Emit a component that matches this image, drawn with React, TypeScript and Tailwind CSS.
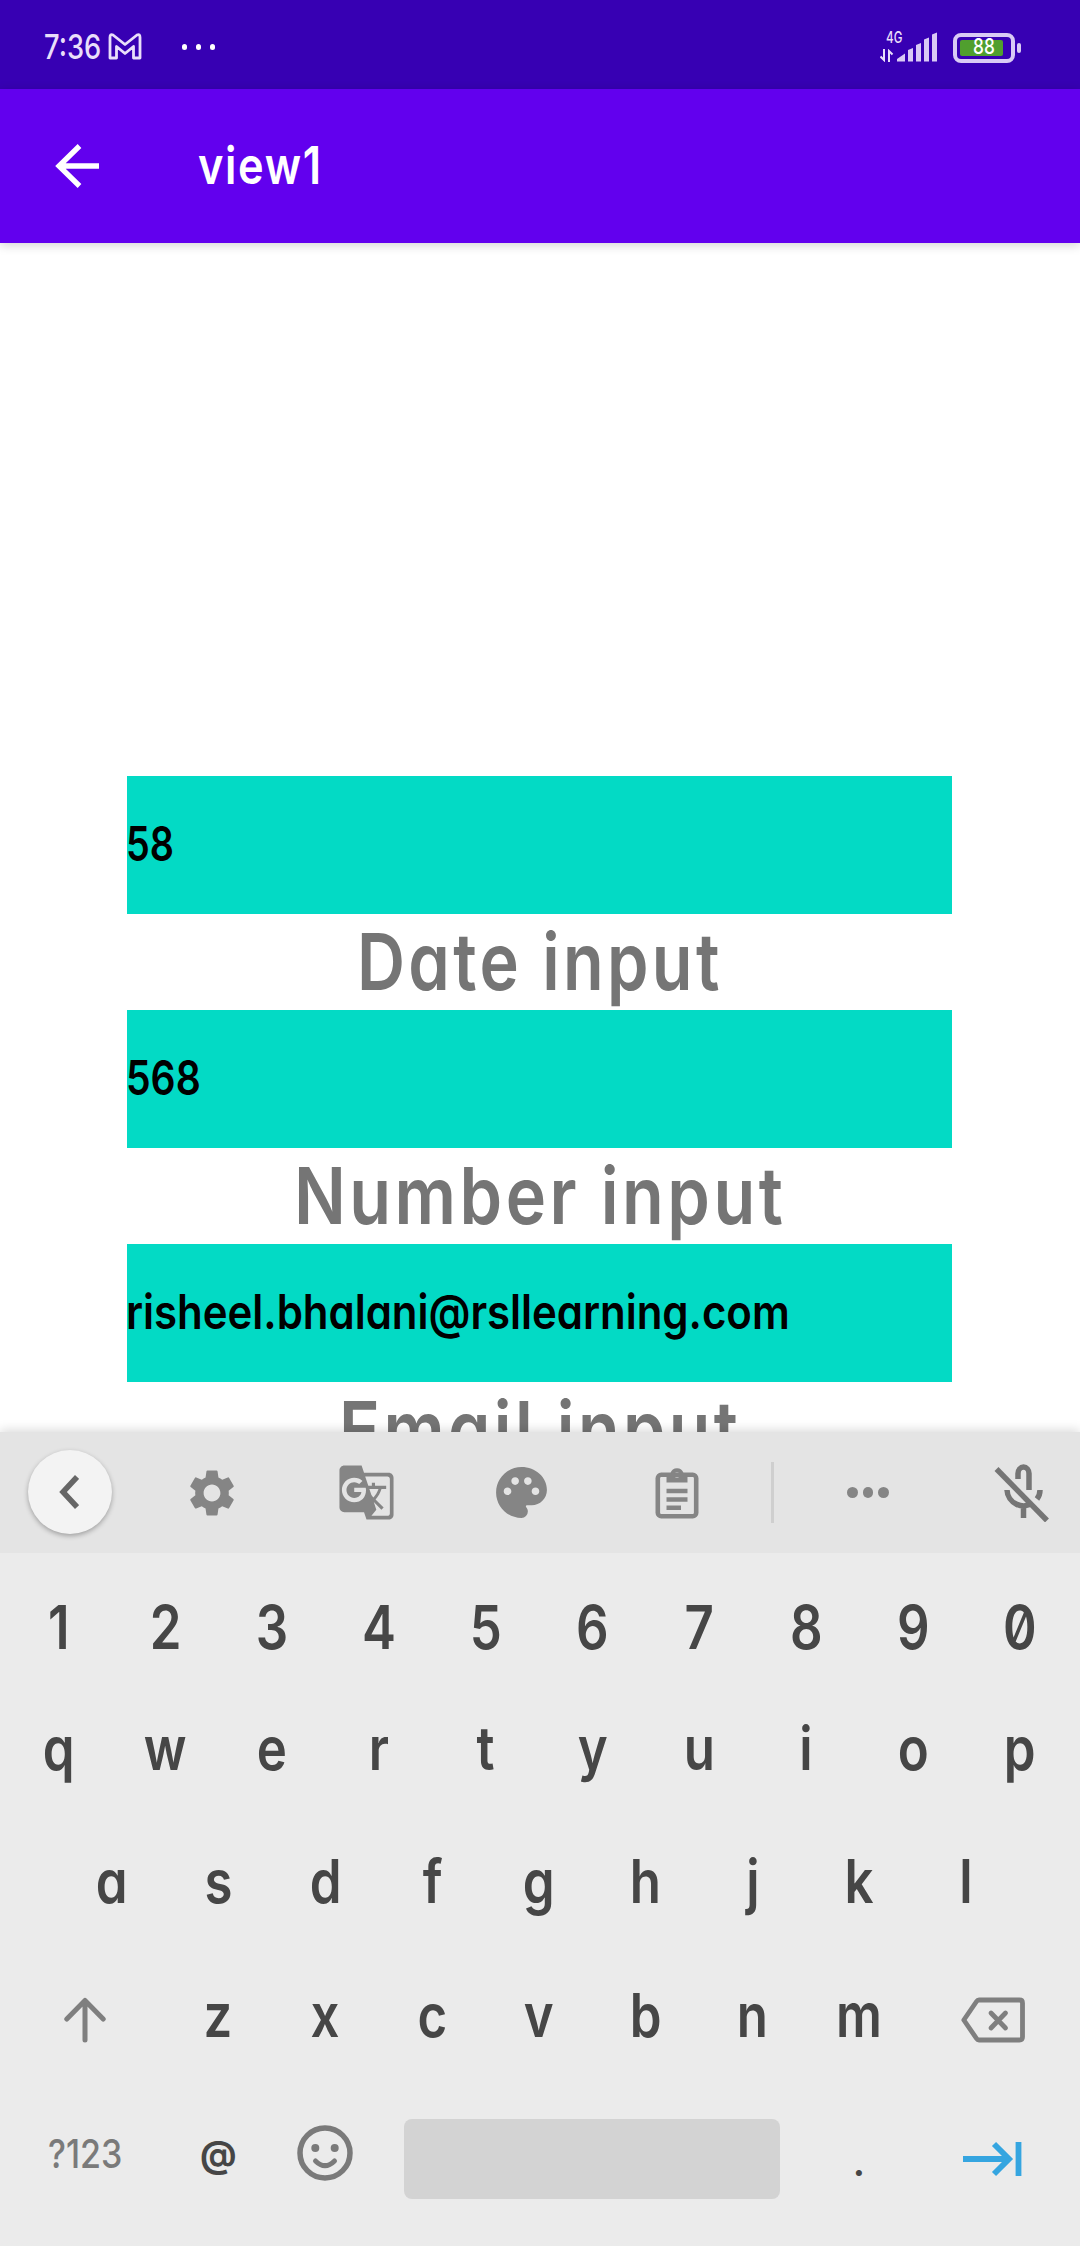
import { useLayoutEffect, useRef, type ReactNode } from 'react';
import { MdSettings, MdGTranslate, MdPalette } from 'react-icons/md';

/** One line of text squeezed or stretched sideways to an exact width. */
function FitText({ width, className, children }: { width: number; className: string; children: string }) {
  const line = useRef<HTMLSpanElement>(null);
  useLayoutEffect(() => {
    const fit = () => {
      if (!line.current) return;
      line.current.style.transform = `scaleX(${width / line.current.offsetWidth})`;
    };
    fit();
    document.fonts?.ready.then(fit);
  }, [width]);
  return (
    <span className="block shrink-0" style={{ width }}>
      <span ref={line} className={`inline-block origin-left whitespace-nowrap ${className}`}>
        {children}
      </span>
    </span>
  );
}

function StatusBar() {
  return (
    <header className="flex h-[89px] items-center bg-[#3700b3] pt-[4px] pr-[59px] pl-[44px] text-[#e9defa]">
      <FitText width={57} className="text-[34px] leading-[40px] font-medium">7:36</FitText>
      <svg className="ml-[7px]" width="34" height="27" viewBox="0 0 34 27" fill="none" stroke="currentColor" strokeWidth="2.8" strokeLinejoin="round">
        <path d="M2 25V4.500Q2 0.500 5 2L17 11.500L29 2Q32 0.500 32 4.500V25H25.500V13.500L17 20.500L8.500 13.500V25Z" />
      </svg>
      <div className="ml-[40px] flex gap-[9px]">
        <i className="h-[6px] w-[5px] rounded-full bg-white" />
        <i className="h-[6px] w-[5px] rounded-full bg-white" />
        <i className="h-[6px] w-[5px] rounded-full bg-white" />
      </div>
      <div className="ml-auto flex h-[34px] items-end">
        <div className="flex h-[39px] w-[17px] flex-col justify-between">
          <div className="ml-[6px] h-[14px]">
            <FitText width={16} className="text-[16px] leading-[14px] font-medium">4G</FitText>
          </div>
          <svg className="mb-[2px]" width="14" height="13" viewBox="0 0 14 13" fill="none" stroke="currentColor" strokeWidth="2">
            <path d="M4 0V11L0.500 7.500M9 13V2L12.500 5.500" />
          </svg>
        </div>
        <svg className="mb-[2px]" width="41" height="30" viewBox="0 0 41 30" fill="#d9caf5">
          <path d="M0 29.500V27L8 21.500V29.500ZM11 29.500V18L16 16V29.500ZM19 29.500V13L24 11V29.500ZM27 29.500V7.500L32 5.500V29.500ZM35 29.500V2.500L40 0.500V29.500Z" />
        </svg>
        <div className="mb-[1px] ml-[15px] flex items-center">
          <div className="flex h-[30px] w-[62px] items-center rounded-[8px] border-4 border-[#d9caf5] px-[3px]">
            <div className="flex h-[16px] w-[43px] items-center rounded-[2px] bg-[#509f2e] pl-[13px] text-white">
              <FitText width={22} className="text-[22px] leading-[18px] font-medium">88</FitText>
            </div>
          </div>
          <i className="ml-[2px] h-[10px] w-[4px] rounded-full bg-[#d9caf5]" />
        </div>
      </div>
    </header>
  );
}

function AppBar() {
  return (
    <div className="relative z-10 flex h-[154px] items-center bg-[#6200ee] pl-[55px] text-white shadow-[0_2px_10px_rgba(0,0,0,0.180)]">
      <svg width="44" height="44" viewBox="0 0 44 44" fill="none" stroke="currentColor" strokeWidth="5.300">
        <path d="M44 22H5M24.500 2L4 22L24.500 42" />
      </svg>
      <div className="ml-[99px]">
        <FitText width={125} className="text-[52px] leading-[60px] font-semibold tracking-[2px]">view1</FitText>
      </div>
    </div>
  );
}

const fields = [
  { value: '58', valueWidth: 48, label: 'Date input', labelWidth: 366 },
  { value: '568', valueWidth: 75, label: 'Number input', labelWidth: 492 },
  { value: 'risheel.bhalani@rsllearning.com', valueWidth: 664, label: 'Email input', labelWidth: 402 },
];

function Form() {
  return (
    <main className="h-[1189px] overflow-hidden bg-white pr-[128px] pl-[127px] pt-[533px]">
      {fields.map((f) => (
        <section key={f.label}>
          <div className="flex h-[138px] items-center bg-[#03dac5] pb-[2px] text-black">
            <div className="-ml-[1px]">
              <FitText width={f.valueWidth} className="text-[48px] leading-[60px] font-semibold">{f.value}</FitText>
            </div>
          </div>
          <div className="flex h-[96px] justify-center text-[#757575]">
            <FitText width={f.labelWidth} className="text-[79px] leading-[95px] font-semibold tracking-[4px]">{f.label}</FitText>
          </div>
        </section>
      ))}
    </main>
  );
}

function Slot({ className, children }: { className: string; children: ReactNode }) {
  return <div className={`flex shrink-0 items-center justify-center ${className}`}>{children}</div>;
}

function ClipboardIcon() {
  return (
    <svg width="44" height="52" viewBox="0 0 44 52" fill="none" stroke="currentColor" strokeWidth="4.600">
      <rect x="2.800" y="7.800" width="38.400" height="41.400" rx="3.500" />
      <path d="M11.500 15.500V6H15.500A6.800 6.800 0 0 1 28.500 6H32.500V15.500ZM22 5.300A2.600 2.600 0 1 0 22 10.500A2.600 2.600 0 1 0 22 5.300Z" fill="currentColor" fillRule="evenodd" stroke="none" />
      <path d="M11.500 24H32.500M11.500 32.500H32.500M11.500 40.800H26" />
    </svg>
  );
}

function MicOffIcon() {
  return (
    <svg width="56" height="58" viewBox="0 0 56 58" fill="none" stroke="#757575" strokeWidth="5.500">
      <path d="M24 15V9.500A5.500 6.500 0 0 1 35 9.500V26" />
      <path d="M13 26A16.500 16.500 0 0 0 40 38M46 26Q46 31 43 35M29.500 43V54" />
      <path d="M5.500 4L55 55.500" stroke="#e4e4e4" strokeWidth="5" />
      <path d="M2.500 5L53 56.500" />
    </svg>
  );
}

function Toolbar() {
  return (
    <div className="flex h-[121px] items-center bg-[#e4e4e4] pl-[28px] text-[#858585]">
      <Slot className="mb-[2px] size-[84px] rounded-full bg-[#f3f3f3] text-[#666] shadow-[0_2px_5px_rgba(0,0,0,0.300)]">
        <svg className="mr-[2px]" width="20" height="34" viewBox="0 0 20 34" fill="none" stroke="currentColor" strokeWidth="5.500">
          <path d="M18 2L4 17L18 32" />
        </svg>
      </Slot>
      <Slot className="ml-[22px] w-[155px]"><MdSettings size={56} /></Slot>
      <Slot className="w-[155px]"><MdGTranslate size={59} /></Slot>
      <Slot className="w-[155px]"><MdPalette size={61} /></Slot>
      <Slot className="w-[155px]"><ClipboardIcon /></Slot>
      <i className="ml-[17px] h-[61px] w-[3px] bg-[#cfcfcf]" />
      <div className="ml-[73px] flex gap-[5px]">
        <i className="size-[10.500px] rounded-full bg-current" />
        <i className="size-[10.500px] rounded-full bg-current" />
        <i className="size-[10.500px] rounded-full bg-current" />
      </div>
      <div className="ml-[105px] shrink-0"><MicOffIcon /></div>
    </div>
  );
}

function Key({ children }: { children: string }) {
  return (
    <span className="flex w-[106.800px] shrink-0 items-center justify-center text-[60px] leading-[70px] text-[#464646]">
      <span className="inline-block scale-x-[0.850] font-semibold">{children}</span>
    </span>
  );
}

function Keyboard() {
  return (
    <div className="h-[693px] bg-[#ebebeb] pr-[7px] pl-[5px] pt-[19px]">
      <div className="flex h-[109px]">
        {[...'1234567890'].map((k) => <Key key={k}>{k}</Key>)}
      </div>
      <div className="flex h-[133px]">
        {[...'qwertyuiop'].map((k) => <Key key={k}>{k}</Key>)}
      </div>
      <div className="flex h-[133px] justify-center">
        {[...'asdfghjkl'].map((k) => <Key key={k}>{k}</Key>)}
      </div>
      <div className="flex h-[136px] text-[#7f7f7f]">
        <Slot className="w-[160px] pt-[10px]">
          <svg width="42" height="46" viewBox="0 0 42 46" fill="none" stroke="currentColor" strokeWidth="5" strokeLinecap="round" strokeLinejoin="round">
            <path d="M21 43V3.500M2.800 22L21 3.500L39.200 22" />
          </svg>
        </Slot>
        {[...'zxcvbnm'].map((k) => <Key key={k}>{k}</Key>)}
        <Slot className="w-[160px] pt-[10px]">
          <svg width="64" height="46" viewBox="0 0 64 46" fill="none" stroke="currentColor" strokeWidth="4.800" strokeLinejoin="round">
            <path d="M18 3H58.500Q61.500 3 61.500 6V40Q61.500 43 58.500 43H18Q16.500 43 15.500 41.500L2.800 23L15.500 4.500Q16.500 3 18 3Z" />
            <path d="M30 16L44.500 31M44.500 16L30 31" strokeLinecap="round" />
          </svg>
        </Slot>
      </div>
      <div className="flex h-[152px] text-[#7a7a7a]">
        <Slot className="w-[160px] pb-[10px]">
          <FitText width={74} className="text-[40px] leading-[50px] font-medium">?123</FitText>
        </Slot>
        <Slot className="w-[106.800px] pb-[10px] text-[36px] font-bold text-[#464646]">@</Slot>
        <Slot className="w-[106.800px] pb-[12px]">
          <svg width="56" height="56" viewBox="0 0 56 56" fill="none" stroke="currentColor" strokeWidth="5.500" strokeLinecap="round">
            <circle cx="28" cy="28" r="25" />
            <path d="M18.500 36Q28 45.500 37.500 36" strokeWidth="5" />
            <circle cx="18.300" cy="23" r="4" fill="currentColor" stroke="none" />
            <circle cx="37.700" cy="23" r="4" fill="currentColor" stroke="none" />
          </svg>
        </Slot>
        <Slot className="w-[427px]">
          <div className="h-[80px] w-[376px] rounded-[8px] bg-[#d3d3d3]" />
        </Slot>
        <Slot className="w-[106.800px] text-[46px] text-[#464646]">.</Slot>
        <Slot className="w-[160px]">
          <svg width="60" height="36" viewBox="0 0 60 36" fill="none" stroke="#35a5e0" strokeWidth="5.800">
            <path d="M1 18H46M32 3L47 18L32 33M56.500 1V35" />
          </svg>
        </Slot>
      </div>
    </div>
  );
}

export default function App() {
  return (
    <div className="h-[2246px] w-[1080px] overflow-hidden bg-white font-['Inter','Open_Sans',sans-serif] [font-feature-settings:'cv11','zero']">
      <StatusBar />
      <AppBar />
      <Form />
      <div className="relative shadow-[0_-2px_10px_rgba(0,0,0,0.150)]">
        <Toolbar />
        <Keyboard />
      </div>
    </div>
  );
}
